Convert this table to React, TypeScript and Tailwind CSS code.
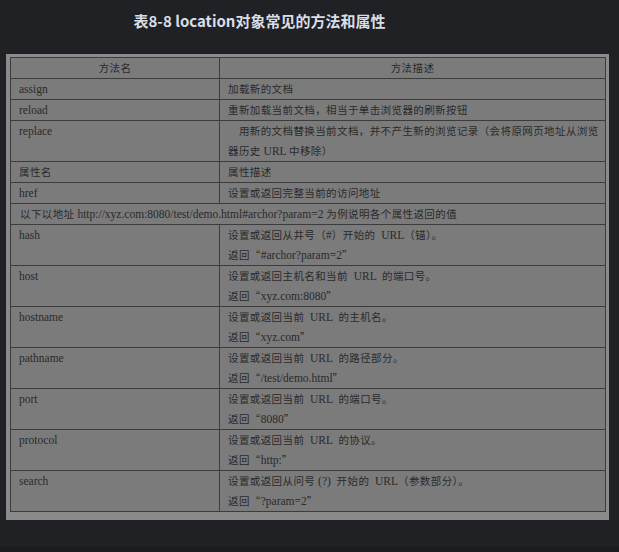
import React from 'react';

type Row = { name?: string; desc: string[]; head?: boolean; span?: string };

const rows: Row[] = [
  { name: '方法名', desc: ['方法描述'], head: true },
  { name: 'assign', desc: ['加载新的文档'] },
  { name: 'reload', desc: ['重新加载当前文档，相当于单击浏览器的刷新按钮'] },
  {
    name: 'replace',
    desc: ['\u3000用新的文档替换当前文档，并不产生新的浏览记录（会将原网页地址从浏览', '器历史 URL 中移除）'],
  },
  { name: '属性名', desc: ['属性描述'] },
  { name: 'href', desc: ['设置或返回完整当前的访问地址'] },
  { span: '以下以地址 http://xyz.com:8080/test/demo.html#archor?param=2 为例说明各个属性返回的值', desc: [] },
  { name: 'hash', desc: ['设置或返回从井号（#）开始的  URL（锚）。', '返回“#archor?param=2”'] },
  { name: 'host', desc: ['设置或返回主机名和当前  URL  的端口号。', '返回“xyz.com:8080”'] },
  { name: 'hostname', desc: ['设置或返回当前  URL  的主机名。', '返回“xyz.com”'] },
  { name: 'pathname', desc: ['设置或返回当前  URL  的路径部分。', '返回“/test/demo.html”'] },
  { name: 'port', desc: ['设置或返回当前  URL  的端口号。', '返回“8080”'] },
  { name: 'protocol', desc: ['设置或返回当前  URL  的协议。', '返回“http:”'] },
  { name: 'search', desc: ['设置或返回从问号 (?)  开始的  URL（参数部分）。', '返回“?param=2”'] },
];

// CJK runs are set in a sans face a touch smaller than the Latin serif runs
function Mixed({ text }: { text: string }) {
  const parts = text.split(/([\u3000-\u9fff\uff00-\uffef“”]+)/);
  return (
    <>
      {parts.map((p, i) =>
        /[\u3000-\u9fff\uff00-\uffef“”]/.test(p) ? (
          <span key={i} className="text-[10.5px] leading-none tracking-[0.4px] font-['Noto_Sans_CJK_SC',sans-serif]">
            {p}
          </span>
        ) : (
          <span key={i}>{p}</span>
        )
      )}
    </>
  );
}

export default function App() {
  return (
    <div className="h-screen w-full bg-[#202124] flex flex-col">
      <div className="flex-1">
        <div className="h-[54px] w-[519px] pt-[9px] text-center text-[15px] leading-[24px] font-bold text-[#d8dee6] font-['Noto_Sans_CJK_SC',sans-serif]">
          表8-8 location对象常见的方法和属性
        </div>

        <div className="ml-[6px] w-[603px] bg-[#8a8a8b] pt-[3px] pl-[4px] pr-[3px] pb-[8px]">
          <table className="w-full table-fixed border-collapse bg-[#7b7b7c] text-[11.5px] leading-[20px] text-[#2a2a2a] font-['Liberation_Serif',serif]">
            <colgroup>
              <col className="w-[209px]" />
              <col />
            </colgroup>
            <tbody>
              {rows.map((r, i) =>
                r.span ? (
                  <tr key={i}>
                    <td colSpan={2} className="border border-[#3c3c3d] px-[9px] py-0 whitespace-nowrap">
                      <Mixed text={r.span} />
                    </td>
                  </tr>
                ) : (
                  <tr key={i}>
                    <td
                      className={
                        r.head
                          ? 'border border-[#3c3c3d] px-[8px] py-0 align-top text-center'
                          : 'border border-[#3c3c3d] px-[8px] py-0 align-top'
                      }
                    >
                      <Mixed text={r.name ?? ''} />
                    </td>
                    <td
                      className={
                        r.head
                          ? 'border border-[#3c3c3d] px-[8px] py-0 align-top text-center'
                          : 'border border-[#3c3c3d] px-[8px] py-0 align-top whitespace-pre'
                      }
                    >
                      {r.desc.map((d, j) => (
                        <div key={j} className="h-[20px]">
                          <Mixed text={d} />
                        </div>
                      ))}
                    </td>
                  </tr>
                )
              )}
            </tbody>
          </table>
        </div>
      </div>
      <div className="h-[5px] bg-[#1b1c1e]" />
    </div>
  );
}
